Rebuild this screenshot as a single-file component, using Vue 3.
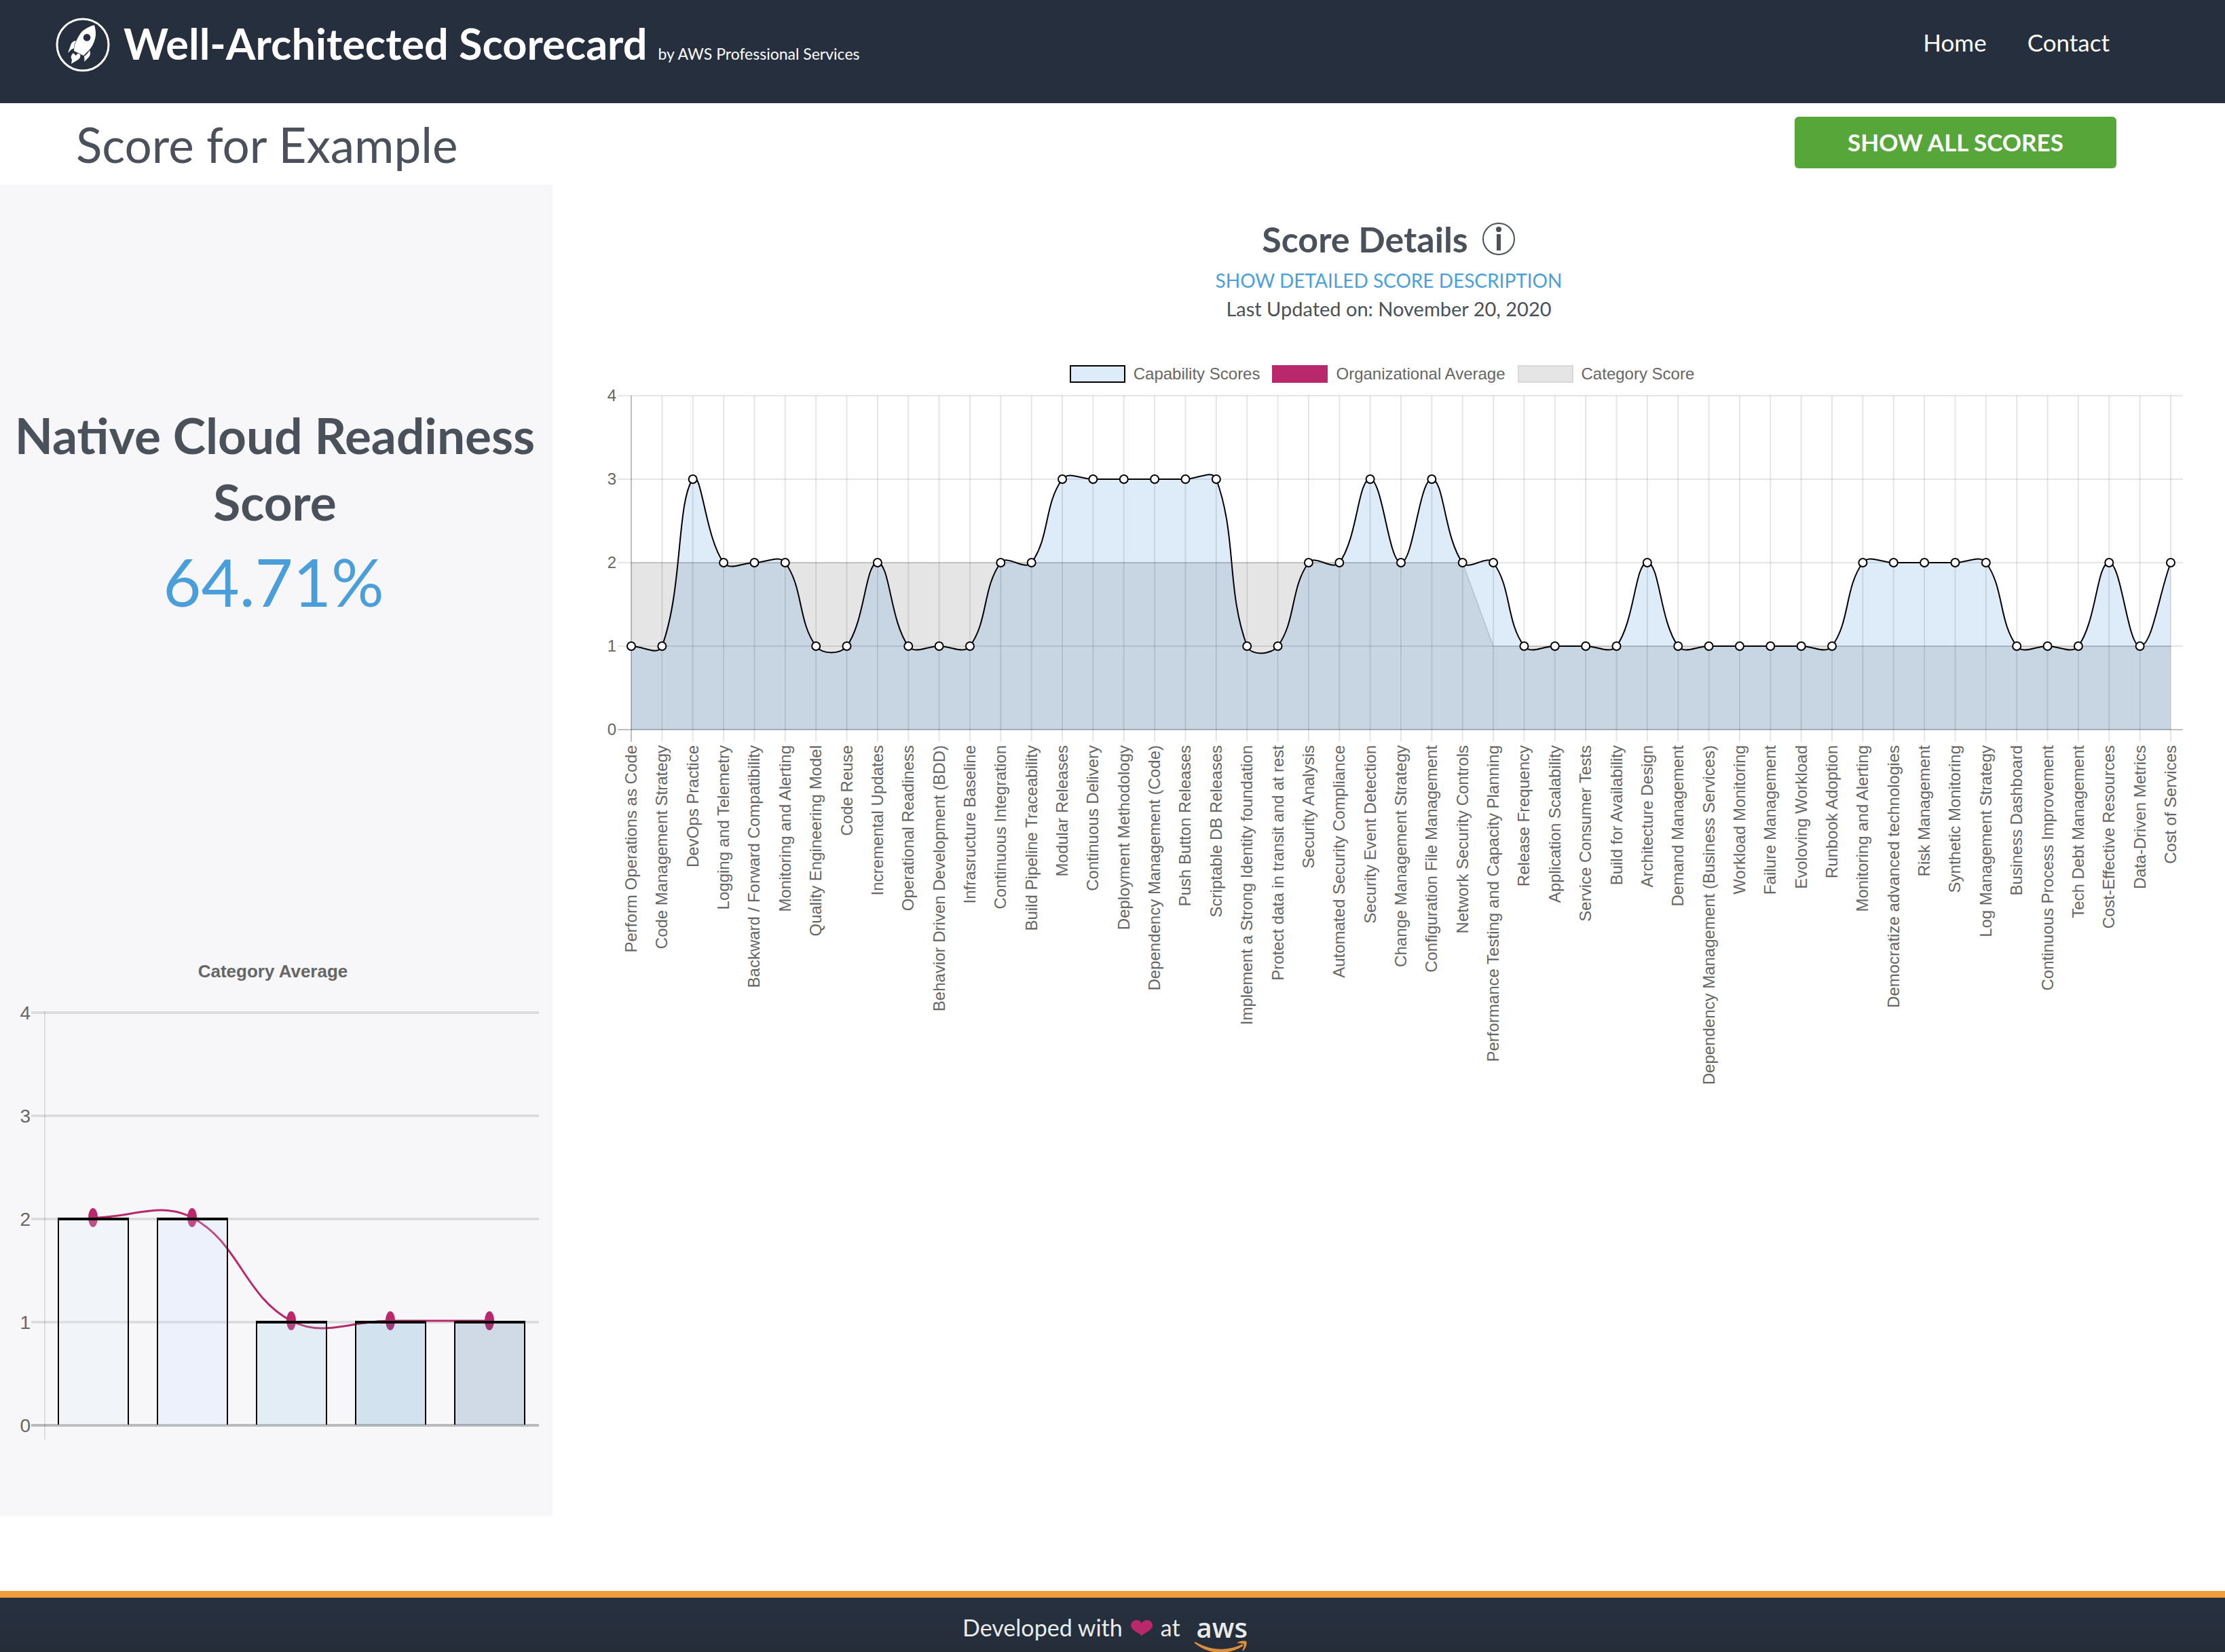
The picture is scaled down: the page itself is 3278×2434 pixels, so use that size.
<script setup>
const capabilities = [
  ['Perform Operations as Code', 1],
  ['Code Management Strategy', 1],
  ['DevOps Practice', 3],
  ['Logging and Telemetry', 2],
  ['Backward / Forward Compatibility', 2],
  ['Monitoring and Alerting', 2],
  ['Quality Engineering Model', 1],
  ['Code Reuse', 1],
  ['Incremental Updates', 2],
  ['Operational Readiness', 1],
  ['Behavior Driven Development (BDD)', 1],
  ['Infrasructure Baseline', 1],
  ['Continuous Integration', 2],
  ['Build Pipeline Traceability', 2],
  ['Modular Releases', 3],
  ['Continuous Delivery', 3],
  ['Deployment Methodology', 3],
  ['Dependency Management (Code)', 3],
  ['Push Button Releases', 3],
  ['Scriptable DB Releases', 3],
  ['Implement a Strong Identity foundation', 1],
  ['Protect data in transit and at rest', 1],
  ['Security Analysis', 2],
  ['Automated Security Compliance', 2],
  ['Security Event Detection', 3],
  ['Change Management Strategy', 2],
  ['Configuration File Management', 3],
  ['Network Security Controls', 2],
  ['Performance Testing and Capacity Planning', 2],
  ['Release Frequency', 1],
  ['Application Scalability', 1],
  ['Service Consumer Tests', 1],
  ['Build for Availability', 1],
  ['Architecture Design', 2],
  ['Demand Management', 1],
  ['Dependency Management (Business Services)', 1],
  ['Workload Monitoring', 1],
  ['Failure Management', 1],
  ['Evoloving Workload', 1],
  ['Runbook Adoption', 1],
  ['Monitoring and Alerting', 2],
  ['Democratize advanced technologies', 2],
  ['Risk Management', 2],
  ['Synthetic Monitoring', 2],
  ['Log Management Strategy', 2],
  ['Business Dashboard', 1],
  ['Continuous Process Improvement', 1],
  ['Tech Debt Management', 1],
  ['Cost-Effective Resources', 2],
  ['Data-Driven Metrics', 1],
  ['Cost of Services', 2],
]
const ticks = [4, 3, 2, 1, 0]

// Smooth path through the points; control points are placed from neighbour distances.
function spline(points, tension = 0.4) {
  const controls = points.map((p, i) => {
    const prev = points[i - 1] || p
    const next = points[i + 1] || p
    const before = Math.hypot(p.x - prev.x, p.y - prev.y)
    const after = Math.hypot(next.x - p.x, next.y - p.y)
    const a = (tension * before) / (before + after)
    const b = (tension * after) / (before + after)
    const dx = next.x - prev.x
    const dy = next.y - prev.y
    return { px: p.x - a * dx, py: p.y - a * dy, nx: p.x + b * dx, ny: p.y + b * dy }
  })
  return points
    .map((p, i) => {
      if (i === 0) return `M${p.x} ${p.y}`
      const c = controls[i - 1]
      const d = controls[i]
      return `C${c.nx} ${c.ny} ${d.px} ${d.py} ${p.x} ${p.y}`
    })
    .join('')
}

const left = 116
const right = 2384
const step = (right - left) / (capabilities.length - 1)
const level = (v) => 504 - v * 123
const points = capabilities.map(([label, value], i) => ({ label, x: left + i * step, y: level(value) }))
const scoreLine = spline(points)
const scoreArea = `${scoreLine}L${right} ${level(0)}L${left} ${level(0)}Z`
const categoryLine = `M${left} ${level(2)}H${left + 27 * step}L${left + 28 * step} ${level(1)}H${right}`
const categoryArea = `${categoryLine}V${level(0)}H${left}Z`

const averages = [
  { value: 2, fill: 'rgba(222, 242, 245, 0.2)' },
  { value: 2, fill: 'rgba(202, 222, 255, 0.2)' },
  { value: 1, fill: 'rgba(152, 202, 230, 0.2)' },
  { value: 1, fill: 'rgba(67, 147, 195, 0.2)' },
  { value: 1, fill: 'rgba(52, 107, 150, 0.2)' },
]
const avgLevel = (v) => 698 - v * 152
const bars = averages.map((a, i) => ({ fill: a.fill, x: 86 + i * 146, y: avgLevel(a.value) }))
const avgPoints = bars.map((b) => ({ x: b.x + 51, y: b.y - 2 }))
const avgLine = spline(avgPoints)

const legend = [
  { label: 'Capability Scores', kind: 'capability' },
  { label: 'Organizational Average', kind: 'organization' },
  { label: 'Category Score', kind: 'category' },
]
</script>

<template>
  <div class="page">
    <header class="topbar">
      <div class="brand">
        <svg class="rocket" viewBox="0 0 80 80" aria-hidden="true">
          <circle cx="40" cy="40" r="38" fill="none" stroke="#fff" stroke-width="3" />
          <path fill="#fff" fill-rule="evenodd" d="M57 11C59 18 60 25 58 31C56 39 52 45 49 48L41 56L27 49C27 44 28 39 31 33C34 27 37 21 42 18C46 15 52 12 57 11ZM46 24a5.300 5.300 0 1 0 .1 0Z" />
          <path fill="#fff" d="M30 34C26 34 23 37 22 41L18 52L23 47L27 45C27 41 28 38 30 34ZM50 48C51 51 52 54 49 58L42 65C43 62 42 59 42 57C45 55 48 52 50 48ZM26 52C22 56 22 59 24 62L23 68L33 62C36 60 37 57 36 54L32 53L30 56L28 54Z" />
        </svg>
        <span class="brand-name">Well-Architected Scorecard</span>
        <span class="brand-by">by AWS Professional Services</span>
      </div>
      <nav class="nav">
        <a href="#">Home</a>
        <a href="#">Contact</a>
      </nav>
    </header>

    <div class="title-row">
      <h1>Score for Example</h1>
      <button type="button" class="show-all">SHOW ALL SCORES</button>
    </div>

    <main class="content">
      <aside class="summary">
        <h2>Native Cloud Readiness Score</h2>
        <p class="percent">64.71%</p>
        <svg class="avg-chart" viewBox="0 0 814 832" role="img" aria-label="Category Average">
          <text class="avg-title" x="402" y="38">Category Average</text>
          <g v-for="t in ticks" :key="t">
            <line x1="46" x2="794" :y1="avgLevel(t)" :y2="avgLevel(t)" :class="['avg-grid', { zero: t === 0 }]" />
            <text class="avg-tick" x="45" :y="avgLevel(t) + 10">{{ t }}</text>
          </g>
          <line class="avg-axis" x1="66" x2="66" y1="88" y2="719" />
          <path class="avg-line" :d="avgLine" />
          <ellipse v-for="p in avgPoints" :key="p.x" :cx="p.x" :cy="p.y" rx="7" ry="14" fill="#b8286b" />
          <g v-for="b in bars" :key="b.x">
            <rect :x="b.x" :y="b.y" width="102" :height="698 - b.y" :fill="b.fill" />
            <path class="bar-side" :d="`M${b.x} 697V${b.y}M${b.x + 103} 697V${b.y}`" />
            <path class="bar-top" :d="`M${b.x - 1} ${b.y}h105`" />
          </g>
        </svg>
      </aside>

      <section class="details">
        <h2 class="details-title">
          Score Details
          <svg class="info" viewBox="0 0 50 50" aria-hidden="true">
            <circle cx="25" cy="25" r="23" fill="none" stroke="currentColor" stroke-width="2" />
            <circle cx="25" cy="11" r="4" fill="currentColor" />
            <rect x="22" y="18" width="6" height="24" fill="currentColor" />
          </svg>
        </h2>
        <a class="describe" href="#">SHOW DETAILED SCORE DESCRIPTION</a>
        <p class="updated">Last Updated on: November 20, 2020</p>

        <ul class="legend">
          <li v-for="item in legend" :key="item.kind">
            <span :class="['swatch', item.kind]"></span>{{ item.label }}
          </li>
        </ul>

        <svg class="score-chart" viewBox="0 0 2464 1040" role="img" aria-label="Capability scores">
          <path :d="categoryArea" fill="#e5e5e5" />
          <path :d="scoreArea" fill="rgba(74, 144, 217, 0.18)" />
          <g v-for="t in ticks" :key="t">
            <line x1="96" x2="2402" :y1="level(t)" :y2="level(t)" :class="['grid', { zero: t === 0 }]" />
            <text class="tick" x="94" :y="level(t) + 8">{{ t }}</text>
          </g>
          <g v-for="(p, i) in points" :key="i">
            <line :x1="p.x" :x2="p.x" y1="12" y2="522" :class="['grid', { zero: i === 0 }]" />
            <text class="tick" :transform="`translate(${p.x + 8} 527) rotate(-90)`">{{ p.label }}</text>
          </g>
          <path :d="categoryLine" class="category-line" />
          <path :d="scoreLine" class="score-line" />
          <circle v-for="(p, i) in points" :key="i" :cx="p.x" :cy="p.y" r="6" class="dot" />
        </svg>
      </section>
    </main>

    <footer class="footer">
      <span>Developed with</span>
      <svg class="heart" viewBox="0 0 32 24" aria-hidden="true">
        <path fill="#b8286b" d="M16 23C11 18 0 15 0 8C0 3 4 0 8 0C12 0 15 2 16 5C17 2 20 0 24 0C28 0 32 3 32 8C32 15 21 18 16 23Z" />
      </svg>
      <span>at</span>
      <span class="aws">
        aws
        <svg class="smile" viewBox="0 0 80 24" aria-hidden="true">
          <path fill="#d98f3c" d="M2 7C24 20 49 21 70 11C73 10 73 13 71 14C50 27 22 26 1 9C1 8 1 7 2 7ZM63 9C67 5 74 5 77 6C79 10 76 17 73 20C71 21 71 20 72 18C74 13 74 11 73 10C70 9 67 9 63 9Z" />
        </svg>
      </span>
    </footer>
  </div>
</template>

<style>
body {
  margin: 0;
  background: #fff;
}
</style>

<style scoped>
.page {
  color: #4a515a;
  font-family: Lato, 'Open Sans', sans-serif;
}
.topbar {
  display: flex;
  justify-content: space-between;
  align-items: flex-start;
  box-sizing: border-box;
  height: 152px;
  padding: 26px 170px 0 82px;
  background: #262f3e;
  color: #fff;
}
.brand {
  display: flex;
  align-items: baseline;
  line-height: 76px;
}
.rocket {
  width: 80px;
  height: 80px;
  margin-right: 20px;
  align-self: flex-start;
}
.brand-name {
  font-size: 63px;
  font-weight: 700;
}
.brand-by {
  margin-left: 16px;
  font-size: 23px;
}
.nav {
  display: flex;
  gap: 60px;
  padding-top: 16px;
  font-size: 35px;
  line-height: 40px;
}
.nav a {
  color: #fff;
  text-decoration: none;
}
.title-row {
  display: flex;
  justify-content: space-between;
  align-items: flex-start;
  height: 120px;
  padding: 0 160px 0 112px;
}
h1 {
  margin: 0;
  font-size: 71px;
  font-weight: 400;
  line-height: 122px;
}
.show-all {
  width: 474px;
  height: 76px;
  margin-top: 20px;
  padding-bottom: 4px;
  border: 0;
  border-radius: 6px;
  background: #56a63a;
  color: #fff;
  font-family: inherit;
  font-size: 35px;
  font-weight: 700;
}
.content {
  display: grid;
  grid-template-columns: 407fr 1232fr;
}
.summary {
  padding-top: 320px;
  background: #f7f7fa;
  text-align: center;
}
.summary h2 {
  margin: 0;
  padding: 0 12px 0 8px;
  font-size: 73px;
  font-weight: 700;
  line-height: 98px;
}
.percent {
  margin: 4px 0 480px;
  padding-right: 8px;
  color: #4a9fdb;
  font-size: 97px;
  line-height: 130px;
}
.avg-chart,
.score-chart {
  display: block;
  width: 100%;
  overflow: visible;
}
.avg-title,
.avg-tick {
  fill: #666;
  font-family: 'Liberation Sans', Arial, sans-serif;
}
.avg-title {
  font-size: 26px;
  font-weight: 700;
  text-anchor: middle;
}
.avg-tick {
  font-size: 28px;
  text-anchor: end;
}
.avg-grid {
  stroke: rgba(0, 0, 0, 0.1);
  stroke-width: 4px;
}
.avg-grid.zero {
  stroke: rgba(0, 0, 0, 0.25);
}
.avg-axis {
  stroke: rgba(0, 0, 0, 0.1);
  stroke-width: 2px;
}
.avg-line {
  fill: none;
  stroke: #b8286b;
  stroke-width: 3px;
}
.bar-side {
  stroke: #000;
  stroke-width: 2px;
}
.bar-top {
  stroke: #000;
  stroke-width: 4px;
}
.details {
  display: flex;
  flex-direction: column;
  align-items: center;
  padding-top: 50px;
}
.details-title {
  display: flex;
  align-items: center;
  gap: 20px;
  margin: 0;
  font-size: 52px;
  font-weight: 700;
  line-height: 60px;
}
.info {
  width: 50px;
  height: 50px;
}
.describe,
.updated {
  margin: 0;
  line-height: 42px;
}
.describe {
  margin-top: 10px;
  color: #4a9fdb;
  font-size: 28px;
  text-decoration: none;
}
.updated {
  font-size: 29px;
}
.legend {
  display: flex;
  gap: 18px;
  margin: 62px 20px 0 0;
  padding: 0;
  list-style: none;
  color: #666;
  font-family: 'Liberation Sans', Arial, sans-serif;
  font-size: 24px;
  line-height: 26px;
}
.legend li {
  display: flex;
  align-items: center;
  gap: 12px;
}
.swatch {
  box-sizing: border-box;
  width: 82px;
  height: 26px;
  border: 2px solid #000;
  background: #deebf9;
}
.swatch.organization {
  border-color: #b8286b;
  background: #b8286b;
}
.swatch.category {
  border-color: #d9d9d9;
  background: #e5e5e5;
}
.score-chart {
  margin-top: 7px;
}
.tick {
  fill: #666;
  font-family: 'Liberation Sans', Arial, sans-serif;
  font-size: 24px;
  text-anchor: end;
}
.grid {
  stroke: rgba(0, 0, 0, 0.1);
  stroke-width: 2px;
}
.grid.zero {
  stroke: rgba(0, 0, 0, 0.25);
}
.category-line {
  fill: none;
  stroke: rgba(0, 0, 0, 0.1);
  stroke-width: 2px;
}
.score-line {
  fill: none;
  stroke: #000;
  stroke-width: 2px;
}
.dot {
  fill: #fff;
  stroke: #000;
  stroke-width: 2px;
}
.footer {
  display: flex;
  justify-content: center;
  align-items: flex-start;
  gap: 12px;
  box-sizing: border-box;
  height: 90px;
  margin-top: 110px;
  padding: 24px 22px 0 0;
  border-top: 10px solid #f09d3a;
  background: linear-gradient(#27303f, #242d38);
  color: #e9ecec;
  font-size: 34px;
  line-height: 40px;
  overflow: hidden;
}
.heart {
  width: 32px;
  height: 24px;
  margin-top: 9px;
}
.aws {
  position: relative;
  margin-left: 12px;
  font-family: 'Open Sans', sans-serif;
  font-size: 40px;
  font-weight: 600;
}
.smile {
  position: absolute;
  top: 34px;
  left: -4px;
  width: 80px;
  height: 24px;
}
</style>
